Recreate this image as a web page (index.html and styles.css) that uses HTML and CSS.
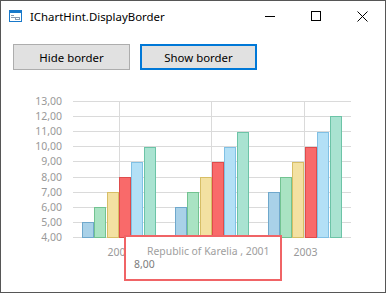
FILE: index.html
```html
<!DOCTYPE html>
<html>
<head>
<meta charset="utf-8">
<link rel="stylesheet" href="styles.css">
</head>
<body>
<div class="window">
  <div class="titlebar">
    <svg class="app-icon" width="13" height="12" viewBox="0 0 13 12">
      <rect x="0.5" y="0.5" width="12" height="11" fill="#fff" stroke="#1979ca"/>
      <rect x="0" y="0" width="13" height="3" fill="#1979ca"/>
      <line x1="2" y1="5.5" x2="5" y2="5.5" stroke="#8a9bb0"/>
      <line x1="2" y1="7.5" x2="7" y2="7.5" stroke="#8a9bb0"/>
      <rect x="6.5" y="7.5" width="4" height="2" fill="none" stroke="#8a9bb0"/>
    </svg>
    <span class="title">IChartHint.DisplayBorder</span>
    <div class="controls">
      <div class="ctl">
        <svg width="10" height="10" viewBox="0 0 10 10"><line x1="0" y1="5.5" x2="10" y2="5.5" stroke="#000"/></svg>
      </div>
      <div class="ctl">
        <svg width="10" height="10" viewBox="0 0 10 10"><rect x="0.5" y="0.5" width="9" height="9" fill="none" stroke="#000"/></svg>
      </div>
      <div class="ctl">
        <svg width="11" height="11" viewBox="0 0 11 11"><path d="M0.5 0.5 L10.5 10.5 M10.5 0.5 L0.5 10.5" stroke="#000" stroke-width="1"/></svg>
      </div>
    </div>
  </div>
  <div class="toolbar">
    <button class="btn">Hide border</button>
    <button class="btn btn-default">Show border</button>
  </div>
  <div class="chart">
    <svg class="plot" width="384" height="212" viewBox="1 80 384 212">
      <g class="grid">
        <line x1="73" y1="101.5" x2="351" y2="101.5"/>
        <line x1="73" y1="116.5" x2="351" y2="116.5"/>
        <line x1="73" y1="131.5" x2="351" y2="131.5"/>
        <line x1="73" y1="146.5" x2="351" y2="146.5"/>
        <line x1="73" y1="161.5" x2="351" y2="161.5"/>
        <line x1="73" y1="177.5" x2="351" y2="177.5"/>
        <line x1="73" y1="192.5" x2="351" y2="192.5"/>
        <line x1="73" y1="207.5" x2="351" y2="207.5"/>
        <line x1="73" y1="222.5" x2="351" y2="222.5"/>
        <line x1="73" y1="237.5" x2="351" y2="237.5"/>
        <line x1="119.5" y1="101" x2="119.5" y2="238"/>
        <line x1="211.5" y1="101" x2="211.5" y2="238"/>
        <line x1="304.5" y1="101" x2="304.5" y2="238"/>
      </g>
      <g class="ylabels">
        <text x="62" y="105">13,00</text>
        <text x="62" y="120">12,00</text>
        <text x="62" y="135">11,00</text>
        <text x="62" y="150">10,00</text>
        <text x="62" y="165">9,00</text>
        <text x="62" y="181">8,00</text>
        <text x="62" y="196">7,00</text>
        <text x="62" y="211">6,00</text>
        <text x="62" y="226">5,00</text>
        <text x="62" y="241">4,00</text>
      </g>
      <g class="bars">
        <rect class="s1" x="82.5" y="222.5" width="11" height="15"/>
        <rect class="s2" x="94.5" y="207.5" width="11" height="30"/>
        <rect class="s3" x="107.5" y="192.5" width="11" height="45"/>
        <rect class="s4" x="119.5" y="177.5" width="11" height="60"/>
        <rect class="s5" x="131.5" y="162.5" width="11" height="75"/>
        <rect class="s6" x="144.5" y="147.5" width="11" height="90"/>

        <rect class="s1" x="175.5" y="207.5" width="11" height="30"/>
        <rect class="s2" x="187.5" y="192.5" width="11" height="45"/>
        <rect class="s3" x="200.5" y="177.5" width="11" height="60"/>
        <rect class="s4" x="212.5" y="162.5" width="11" height="75"/>
        <rect class="s5" x="224.5" y="147.5" width="11" height="90"/>
        <rect class="s6" x="237.5" y="132.5" width="11" height="105"/>

        <rect class="s1" x="268.5" y="192.5" width="11" height="45"/>
        <rect class="s2" x="280.5" y="177.5" width="11" height="60"/>
        <rect class="s3" x="292.5" y="162.5" width="11" height="75"/>
        <rect class="s4" x="305.5" y="147.5" width="11" height="90"/>
        <rect class="s5" x="317.5" y="132.5" width="11" height="105"/>
        <rect class="s6" x="330.5" y="116.5" width="11" height="121"/>
      </g>
      <g class="xlabels">
        <text x="119.5" y="256">2001</text>
        <text x="305.5" y="256">2003</text>
      </g>
    </svg>
    <div class="hint">
      <div class="hint-title">Republic of Karelia , 2001</div>
      <div class="hint-value">8,00</div>
    </div>
  </div>
</div>
</body>
</html>
```

FILE: styles.css
```css
* { box-sizing: border-box; }
html, body { margin: 0; padding: 0; background: #fff; }
body {
  width: 386px;
  height: 293px;
  overflow: hidden;
  font-family: "Noto Sans", "Liberation Sans", sans-serif;
}
.window {
  width: 386px;
  height: 293px;
  border: 1px solid #565656;
  background: #fff;
  display: flex;
  flex-direction: column;
}
.titlebar {
  height: 30px;
  display: flex;
  align-items: center;
  position: relative;
}
.app-icon {
  margin-left: 8px;
  flex: none;
}
.title {
  margin-left: 8px;
  font-size: 11.4px;
  color: #000;
  line-height: 16px;
  margin-top: 1px;
}
.controls {
  margin-left: auto;
  display: flex;
  height: 30px;
}
.ctl {
  width: 46px;
  height: 30px;
  display: flex;
  align-items: center;
  justify-content: center;
}
.ctl svg { display: block; }
.toolbar {
  display: flex;
  gap: 10px;
  padding: 13px 0 0 12px;
  height: 39px;
}
.btn {
  width: 117px;
  height: 26px;
  background: #e1e1e1;
  border: 1px solid #adadad;
  font-family: "Noto Sans", "Liberation Sans", sans-serif;
  font-size: 11.4px;
  color: #000;
  padding: 0;
  margin: 0;
}
.btn-default {
  border: 2px solid #0078d7;
}
.chart {
  margin-top: 10px;
  position: relative;
  height: 212px;
}
.plot { display: block; }
.grid line { stroke: #dadada; stroke-width: 1; }
.ylabels text {
  font-size: 10.5px;
  fill: #999;
  text-anchor: end;
  font-family: "Noto Sans", "Liberation Sans", sans-serif;
}
.xlabels text {
  font-size: 10.5px;
  fill: #999;
  text-anchor: middle;
  font-family: "Noto Sans", "Liberation Sans", sans-serif;
}
.bars rect { stroke-width: 1; }
.s1 { fill: #a9d1e8; stroke: #6fa8cc; }
.s2 { fill: #a9e3c3; stroke: #72c391; }
.s3 { fill: #f3e1a2; stroke: #d7be66; }
.s4 { fill: #f96a6a; stroke: #de4c4c; }
.s5 { fill: #b3e0f6; stroke: #80c0e4; }
.s6 { fill: #a9e3d1; stroke: #6cc4a7; }
.hint {
  position: absolute;
  left: 123px;
  top: 155px;
  width: 158px;
  height: 46px;
  background: #fff;
  border: 2px solid #f06466;
  padding-top: 8px;
  font-size: 10.4px;
  line-height: 13px;
}
.hint-title {
  padding-left: 21px;
  color: #9e9e9e;
}
.hint-value {
  padding-left: 8px;
  color: #7c7c7c;
}
```
